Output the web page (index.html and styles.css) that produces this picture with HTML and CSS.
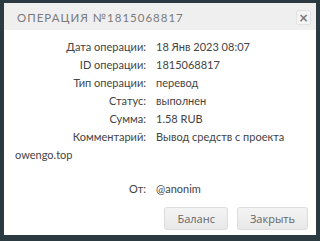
FILE: index.html
```html
<!DOCTYPE html>
<html>
<head>
<meta charset="utf-8">
<link rel="stylesheet" href="styles.css">
</head>
<body>
<div class="modal">
  <div class="modal-header">
    <span class="title">Операция №1815068817</span>
    <button class="close">&times;</button>
  </div>
  <div class="modal-body">
    <div class="row"><span class="label">Дата операции:</span><span class="val">18 Янв 2023 08:07</span></div>
    <div class="row"><span class="label">ID операции:</span><span class="val">1815068817</span></div>
    <div class="row"><span class="label">Тип операции:</span><span class="val">перевод</span></div>
    <div class="row"><span class="label">Статус:</span><span class="val">выполнен</span></div>
    <div class="row"><span class="label">Сумма:</span><span class="val">1.58 RUB</span></div>
    <div class="row"><span class="label">Комментарий:</span>Вывод средств с проекта owengo.top</div>
    <div class="row from"><span class="label">От:</span><span class="val">@anonim</span></div>
  </div>
  <div class="modal-footer">
    <button class="btn">Баланс</button>
    <button class="btn">Закрыть</button>
  </div>
</div>
</body>
</html>
```
FILE: styles.css
```css
html, body { margin: 0; padding: 0; }
body {
  background: #2b3941;
  width: 320px;
  height: 241px;
  overflow: hidden;
  padding: 3px 4px 0 4px;
  box-sizing: border-box;
  font-family: "Lato", "Open Sans", sans-serif;
}
.modal {
  background: #fff;
  width: 312px;
  height: 232px;
  display: flex;
  flex-direction: column;
}
.modal-header {
  background: #efefef;
  height: 27px;
  display: flex;
  align-items: center;
  justify-content: space-between;
  padding: 0 5px 0 13px;
}
.title {
  text-transform: uppercase;
  color: #7a7a7a;
  font-size: 11.5px;
  letter-spacing: 1px;
  padding-top: 1px;
}
.close {
  width: 15px;
  height: 15px;
  padding: 0;
  border: 1px solid #e2e2e2;
  border-radius: 2px;
  background: #f4f4f4;
  color: #777;
  font-size: 12px;
  font-weight: bold;
  line-height: 12px;
  font-family: "DejaVu Sans", sans-serif;
  margin-top: 2px;
}
.modal-body {
  padding: 8px 11px 0 11px;
  color: #444;
  font-size: 11px;
  line-height: 18px;
  flex: 1;
}
.label {
  display: inline-block;
  width: 131px;
  text-align: right;
  margin-right: 10px;
}
.from { margin-top: 16px; }
.modal-footer {
  display: flex;
  justify-content: flex-end;
  gap: 9px;
  padding: 0 8px 5px 0;
}
.btn {
  height: 23px;
  border: 1px solid #dcdcdc;
  border-radius: 3px;
  background: linear-gradient(#f4f4f4, #e8e8e8);
  color: #666;
  font-family: "Open Sans", sans-serif;
  font-size: 11px;
  padding: 0 12px;
}
```
